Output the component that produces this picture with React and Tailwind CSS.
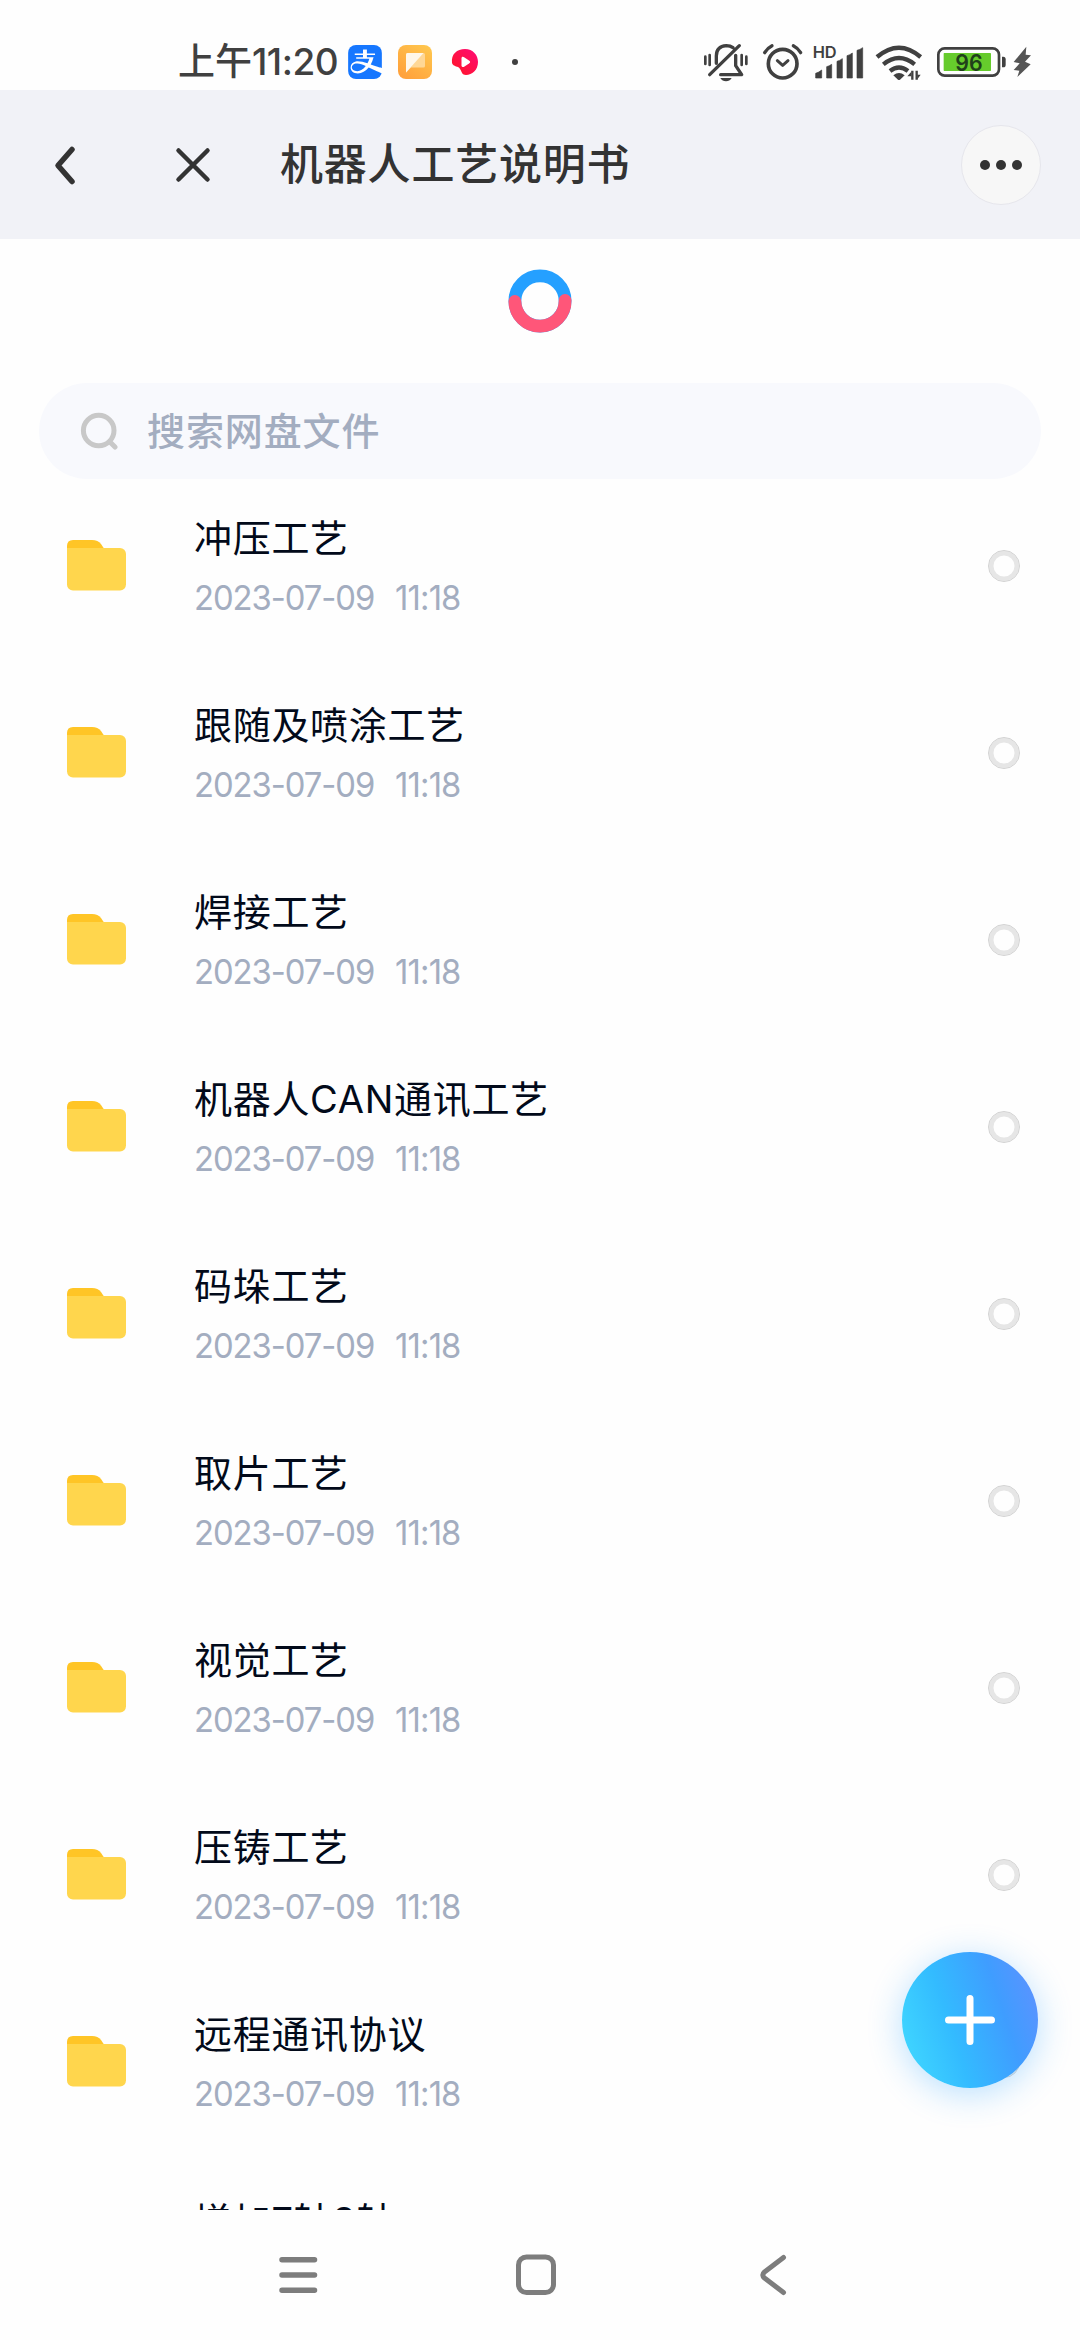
import { SiAlipay } from 'react-icons/si'

const DATE = '2023-07-09'
const TIME = '11:18'

const folders = [
  '冲压工艺',
  '跟随及喷涂工艺',
  '焊接工艺',
  '机器人CAN通讯工艺',
  '码垛工艺',
  '取片工艺',
  '视觉工艺',
  '压铸工艺',
  '远程通讯协议',
  '增加7轴8轴',
]

function StatusBar() {
  return (
    <div className="flex h-[90px] shrink-0 items-start pt-[42px] text-[#404040]">
      <div className="ml-[178px] flex h-10 w-[170px] items-center whitespace-nowrap font-['Inter','Noto_Sans_CJK_SC',sans-serif] text-[37px] font-medium">
        <span>上午</span>
        <span className="tracking-[-0.5px]">11:20</span>
      </div>
      <div className="mt-[3px] flex items-center gap-4">
        <SiAlipay className="size-[34px] rounded-lg text-[#1677ff]" />
        <svg width="34" height="34" viewBox="0 0 34 34">
          <defs>
            <linearGradient id="note" x1="1" y1="0" x2="0.3" y2="1">
              <stop offset="0" stopColor="#ffc94f" />
              <stop offset="1" stopColor="#ffa23c" />
            </linearGradient>
          </defs>
          <rect width="34" height="34" rx="8" fill="url(#note)" />
          <path d="M9.500 8h16a1.500 1.500 0 0 1 1.500 1.500v11.500a1.500 1.500 0 0 1-1.500 1.500H13L8 27.500V9.500A1.500 1.500 0 0 1 9.500 8z" fill="#ffd795" />
          <path d="M9.500 8h16L8 27.500V9.500A1.500 1.500 0 0 1 9.500 8z" fill="#fff7ea" />
        </svg>
        <svg width="34" height="34" viewBox="0 0 34 34">
          <defs>
            <linearGradient id="video" x1="1" y1="0" x2="0" y2="1">
              <stop offset="0" stopColor="#ff0a78" />
              <stop offset="1" stopColor="#ff1620" />
            </linearGradient>
          </defs>
          <path d="M4 18C3 9 9 4 17 4c8 0 13 6 13 13 0 8-6 13-12 13-4 0-4-3-6-6-1-3-7-2-8-6z" fill="url(#video)" />
          <path d="M13.500 13.500c0-2 1.500-2 3-1l4.500 3c1.500 1 1.500 2 0 3l-4.500 3c-1.500 1-3 .5-3-1z" fill="#fff" />
        </svg>
      </div>
      <span className="ml-[30px] mt-[17px] size-1.5 rounded-full bg-[#404040]" />
      <div className="ml-[184px] flex">
        {/* muted bell */}
        <svg width="48" height="40" viewBox="36 36 144 120" fill="none" stroke="currentColor" strokeWidth="10" strokeLinecap="round" strokeLinejoin="round">
          <path d="M79 100V78q0-29 30-31 12 0 20 6M137 76v31l18 27H92M148 47L59 134" />
          <path d="M91 144h34q-6 10-17 10t-17-10z" fill="currentColor" stroke="none" />
          <path d="M46 80v22M59 75v30M155 75v30M169 80v22" strokeWidth="8" />
        </svg>
        {/* alarm clock */}
        <svg className="ml-[11px]" width="43" height="40" viewBox="213 36 129 120" fill="none" stroke="currentColor" strokeLinecap="round" strokeLinejoin="round">
          <circle cx="278" cy="101" r="43" strokeWidth="11" />
          <path d="M224 68q8-14 22-21M332 68q-8-14-22-21" strokeWidth="10" />
          <path d="M262 92l16 14 16-14" strokeWidth="9" />
        </svg>
        {/* signal */}
        <svg className="ml-2" width="52" height="40" viewBox="366 36 156 120" fill="currentColor">
          <text x="368" y="83" fontSize="46" fontWeight="600" fontFamily="Inter, sans-serif" textLength="72" lengthAdjust="spacingAndGlyphs">HD</text>
          <path d="M377 144v-14q10-3 18-10v24zM410 144v-34q8-2 15-7v41zM441 144V94q8-2 16-8v58zM471 144V77q9-2 16-8v75zM501 144V61q9-2 17-8v91z" stroke="currentColor" strokeWidth="2" />
        </svg>
        {/* wifi */}
        <svg className="ml-2.5" width="49" height="40" viewBox="552 36 147 120" fill="none" stroke="currentColor" strokeWidth="13">
          <path d="M561 81q66-56 131 0M580 103q47-38 94 0M600 123q27-21 54 0" />
          <path d="M610 136q17-14 34 0l-14 13q-3 2-6 0z" fill="currentColor" stroke="none" />
          <path d="M667 122v27M680 122v27" strokeWidth="7" />
          <path d="M652 139l12-14v14zM692 134l-10 14v-14z" fill="currentColor" stroke="none" />
        </svg>
        {/* battery */}
        <svg className="ml-[13px]" width="71" height="40" viewBox="738 36 213 120" fill="none">
          <rect x="745" y="55" width="182" height="82" rx="19" stroke="currentColor" strokeWidth="8" />
          <rect x="761" y="69" width="142" height="54" rx="2" fill="#66cb2c" />
          <path d="M936 80h4q7 0 7 8v16q0 8-7 8h-4z" fill="currentColor" />
          <text x="796" y="122" fontSize="68" fontWeight="600" fill="#20401a" fontFamily="Inter, sans-serif" textLength="82" lengthAdjust="spacingAndGlyphs">96</text>
        </svg>
        <svg className="ml-[5px]" width="20" height="40" viewBox="966 36 60 120" fill="#555">
          <path d="M1009 50l-38 46 18 4-18 20 17 2-6 19 40-38-17-8 18-19-16-2z" />
        </svg>
      </div>
    </div>
  )
}

function Header() {
  return (
    <header className="flex h-[149px] shrink-0 items-center bg-[#f1f2f7] pl-[50px] pr-[39px] text-[#333]">
      <svg width="30" height="44" viewBox="0 0 30 44" fill="none" stroke="currentColor" strokeWidth="5.500" strokeLinecap="round" strokeLinejoin="round">
        <path d="M22 6.500L8 22.500l14 16" />
      </svg>
      <svg className="ml-[93px]" width="40" height="40" viewBox="0 0 40 40" fill="none" stroke="currentColor" strokeWidth="4.500" strokeLinecap="round">
        <path d="M5.500 5.500l29 29M34.500 5.500l-29 29" />
      </svg>
      <h1 className="ml-[67px] whitespace-nowrap text-[43px] font-medium leading-none tracking-[0.8px]">
        机器人工艺说明书
      </h1>
      <button className="ml-auto flex size-20 items-center justify-center gap-1.5 rounded-full border border-[#e6e6ec] bg-[#f7f7f7]">
        <span className="size-2.5 rounded-full bg-[#333]" />
        <span className="size-2.5 rounded-full bg-[#333]" />
        <span className="size-2.5 rounded-full bg-[#333]" />
      </button>
    </header>
  )
}

function Loader() {
  return (
    <svg width="64" height="64" viewBox="0 0 64 64" fill="none" strokeWidth="12.800" strokeLinecap="round">
      <circle cx="32" cy="32" r="25.100" stroke="#25a0ff" />
      <path d="M6.900 32.500a25.100 25.100 0 0 0 50.200-1" stroke="#ff5679" />
    </svg>
  )
}

function FolderIcon() {
  return (
    <svg className="shrink-0" width="60" height="52" viewBox="0 0 60 52">
      <path d="M0 20V7q0-6 6-6h19q6 0 9 4l4 6v9z" fill="#ffc526" />
      <rect y="9" width="59" height="42.500" rx="6" fill="#ffd64d" />
      <path d="M0 9h20v10H0z" fill="#ffd64d" />
    </svg>
  )
}

function FolderRow({ name }) {
  return (
    <li className="flex h-[187px] items-start pl-[67px] pr-[60px] pt-8">
      <div className="flex h-[108px] w-full items-center">
        <FolderIcon />
        <div className="ml-[67px] flex-1 whitespace-nowrap pt-0.5">
          <div className="h-[52px] text-[38px] leading-[52px] tracking-[0.7px] text-[#020a1a]">{name}</div>
          <div className="mt-3 flex h-11 origin-left scale-x-95 items-center gap-[22px] text-[34.500px] text-[#a3adc0]">
            <span className="tracking-[-1.1px]">{DATE}</span>
            <span className="tracking-[-0.9px]">{TIME}</span>
          </div>
        </div>
        <span className="mt-0.5 size-8 rounded-full border border-[#d2d2d2] shadow-[inset_0_0_0_4.500px_#e6e6e6]" />
      </div>
    </li>
  )
}

function NavBar() {
  return (
    <nav className="flex h-[130px] shrink-0 items-start bg-[#fefefe] pt-11 text-[#7d7d7d]">
      <svg className="ml-[278px]" width="40" height="42" viewBox="0 0 40 42" stroke="currentColor" strokeWidth="5.500" strokeLinecap="round">
        <path d="M4 5.700h32.500M4 21h32.500M4 36.300h32.500" />
      </svg>
      <svg className="ml-[197px]" width="42" height="42" viewBox="0 0 42 42" fill="none" stroke="currentColor" strokeWidth="5">
        <rect x="3.500" y="3" width="35" height="35.500" rx="8" />
      </svg>
      <svg className="ml-[202px]" width="30" height="42" viewBox="0 0 30 42" fill="none" stroke="currentColor" strokeWidth="5" strokeLinecap="round" strokeLinejoin="round">
        <path d="M24.500 3.500L5.500 18q-3.500 3 0 6l19 14.500" />
      </svg>
    </nav>
  )
}

export default function App() {
  return (
    <div className="relative flex h-[2340px] w-[1080px] flex-col overflow-hidden bg-[#fefefe] font-['Inter','Noto_Sans_CJK_SC',sans-serif]">
      <StatusBar />
      <Header />
      <main className="flex min-h-0 flex-1 flex-col overflow-hidden">
        <div className="flex h-36 shrink-0 justify-center pt-[30px]">
          <Loader />
        </div>
        <div className="mx-[39px] flex h-24 shrink-0 items-center rounded-full bg-[#f8f9fd] pl-[41px]">
          <svg width="38" height="38" viewBox="0 0 38 38" fill="none" stroke="#c8c8c8" strokeLinecap="round">
            <circle cx="18.700" cy="18.500" r="15.300" strokeWidth="5" />
            <path d="M30 30l5 5" strokeWidth="5" />
          </svg>
          <span className="ml-[29px] text-[38px] font-medium leading-none tracking-[0.9px] text-[#a3adc0]">搜索网盘文件</span>
        </div>
        <ul className="shrink-0">
          {folders.map(name => (
            <FolderRow key={name} name={name} />
          ))}
        </ul>
      </main>
      <NavBar />

      <button className="absolute left-[902px] top-[1952px] flex size-[136px] items-center justify-center rounded-full bg-[linear-gradient(72deg,#42dcff_0%,#33bbff_38%,#3f9dff_70%,#6390ff_100%)] shadow-[0_6px_34px_rgba(37,160,255,0.32)]">
        <svg width="50" height="50" viewBox="0 0 50 50" stroke="#fff" strokeWidth="7" strokeLinecap="round">
          <path d="M3.500 25h43M25 3.500v43" />
        </svg>
      </button>
    </div>
  )
}
